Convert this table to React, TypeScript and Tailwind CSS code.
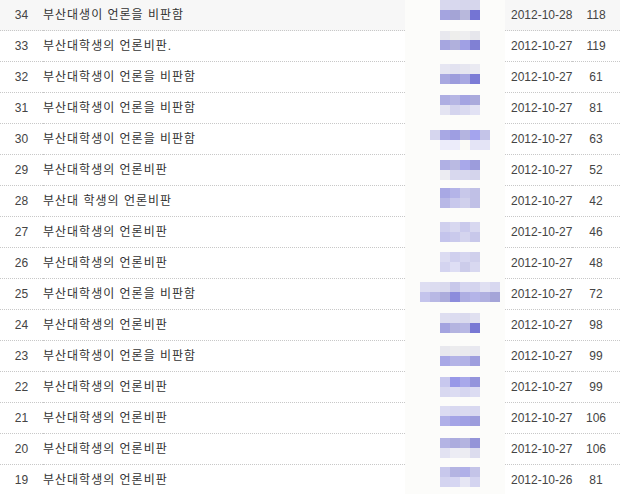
import React from "react";

type Row = {
  no: number;
  title: string;
  date: string;
  views: number;
  x: number;
  y: number;
  top: string[];
  bottom: string[];
};

const rows: Row[] = [
  { no: 34, title: "부산대생이 언론을 비판함", date: "2012-10-28", views: 118, x: 35, y: 0, top: ["#d8d8ee", "#d8d8ee", "#d6d6ec", "#d6d6ec"], bottom: ["#a4a4e0", "#a4a4d6", "#b8b8dc", "#7474d4"] },
  { no: 33, title: "부산대학생의 언론비판.", date: "2012-10-27", views: 119, x: 35, y: -1, top: ["#e8e8ee", "#eeeeec", "#eeeef0", "#e6e6ec"], bottom: ["#a6a6e0", "#b0b0dc", "#a0a0e4", "#8080d4"] },
  { no: 32, title: "부산대학생이 언론을 비판함", date: "2012-10-27", views: 61, x: 35, y: 2, top: ["#e6e6f2", "#e2e2f0", "#e6e6f0", "#eaeaf2"], bottom: ["#a8a8e0", "#9c9cdc", "#a8a8e2", "#7c7cd6"] },
  { no: 31, title: "부산대학생이 언론을 비판함", date: "2012-10-27", views: 81, x: 35, y: 2, top: ["#aeaee2", "#b6b6e4", "#a4a4e2", "#aaaadc"], bottom: ["#e4e4f2", "#d4d4ee", "#dadaf0", "#e2e2f4"] },
  { no: 30, title: "부산대학생이 언론을 비판함", date: "2012-10-27", views: 63, x: 25, y: 6, top: ["#d6d6ee", "#a8a8e4", "#9e9ee2", "#b4b4e0", "#a4a4ee", "#c4c4e8"], bottom: ["#fcfcfa", "#ececfa", "#ececfa", "#fafaf6", "#e4e4f6", "#e4e4f6"] },
  { no: 29, title: "부산대학생의 언론비판", date: "2012-10-27", views: 52, x: 35, y: 5, top: ["#b0b0e4", "#babae2", "#a8a8ea", "#9c9cdc"], bottom: ["#ececf2", "#d8d8ee", "#d8d8ee", "#d4d4ec"] },
  { no: 28, title: "부산대 학생의 언론비판", date: "2012-10-27", views: 42, x: 35, y: 2, top: ["#a8a8e4", "#b4b4e8", "#c8c8ea", "#c0c0e6"], bottom: ["#b8b8e6", "#c8c8ec", "#d0d0ec", "#c0c0e6"] },
  { no: 27, title: "부산대학생의 언론비판", date: "2012-10-27", views: 46, x: 35, y: 5, top: ["#d0d0ee", "#d8d8f0", "#cacaec", "#d8d8f0"], bottom: ["#c4c4ec", "#cacaec", "#d4d4ee", "#c8c8ea"] },
  { no: 26, title: "부산대학생의 언론비판", date: "2012-10-27", views: 48, x: 35, y: 4, top: ["#dcdcf2", "#d0d0ee", "#d6d6f0", "#d0d0ec"], bottom: ["#d4d4f0", "#dedef4", "#ccccea", "#d8d8f0"] },
  { no: 25, title: "부산대학생이 언론을 비판함", date: "2012-10-27", views: 72, x: 15, y: 3, top: ["#dedef2", "#dcdcf0", "#dadaee", "#c8c8ea", "#d6d6f0", "#d4d4ee", "#e0e0f2", "#d8d8f0"], bottom: ["#c4c4ec", "#b8b8e4", "#acacdc", "#8c8cdc", "#aeaee2", "#b4b4e8", "#b0b0e0", "#a4a4d8"] },
  { no: 24, title: "부산대학생의 언론비판", date: "2012-10-27", views: 98, x: 35, y: 3, top: ["#dedef0", "#dcdcf0", "#dadaee", "#e0e0f0"], bottom: ["#a4a4e0", "#b4b4e0", "#b8b8e4", "#7878d4"] },
  { no: 23, title: "부산대학생이 언론을 비판함", date: "2012-10-27", views: 99, x: 35, y: 5, top: ["#e8e8ee", "#ececee", "#eaeaee", "#e8e8f0"], bottom: ["#a8a8e6", "#b4b4e6", "#b2b2e6", "#9e9ede"] },
  { no: 22, title: "부산대학생의 언론비판", date: "2012-10-27", views: 99, x: 35, y: 5, top: ["#c8c8ee", "#9898e8", "#a8a8ea", "#9494dc"], bottom: ["#d8d8f0", "#dcdcf2", "#d6d6f0", "#dcdcf2"] },
  { no: 21, title: "부산대학생의 언론비판", date: "2012-10-27", views: 106, x: 35, y: 3, top: ["#dcdcf2", "#d8d8f0", "#dadaf0", "#d8d8f0"], bottom: ["#b0b0e8", "#a4a4e6", "#a0a0e4", "#9c9cdc"] },
  { no: 20, title: "부산대학생의 언론비판", date: "2012-10-27", views: 106, x: 35, y: 4, top: ["#b4b4e4", "#acacde", "#b4b4e0", "#9494d8"], bottom: ["#e2e2f2", "#ececf4", "#ececf2", "#dcdcee"] },
  { no: 19, title: "부산대학생의 언론비판", date: "2012-10-26", views: 81, x: 35, y: 2, top: ["#c8c8ec", "#b4b4e2", "#b0b0e8", "#c4c4e8"], bottom: ["#d4d4f0", "#d6d6f2", "#e6e6f4", "#d4d4f0"] },
];

function Mosaic({ r }: { r: Row }) {
  return (
    <svg width="100" height="31" viewBox="0 0 100 31" className="block">
      {r.top.map((c, i) => (
        <rect key={"t" + i} x={r.x + i * 10} y={r.y} width="10" height="10" fill={c} />
      ))}
      {r.bottom.map((c, i) => (
        <rect key={"b" + i} x={r.x + i * 10} y={r.y + 10} width="10" height="10" fill={c} />
      ))}
    </svg>
  );
}

export default function App() {
  return (
    <div
      className="w-[623px] h-[494px] overflow-hidden bg-white text-[12px] text-[#444] whitespace-nowrap"
      style={{ fontFamily: '"Liberation Sans", "Noto Sans CJK KR", sans-serif' }}
    >
      {rows.map((r, idx) => (
        <div
          key={r.no}
          className={`flex h-[31px] w-[620px] ${idx === 0 ? "bg-[#f7f7f7]" : "bg-white"}`}
        >
          <div className="w-[43px] shrink-0 flex items-center justify-center border-b border-dotted border-[#c8c8c8] pb-[1px]">
            {r.no}
          </div>
          <div className="w-[362px] shrink-0 flex items-center border-b border-dotted border-[#c8c8c8] text-[#333] tracking-[1px] pb-[1px]">
            {r.title}
          </div>
          <div className="w-[100px] shrink-0 bg-[#fcfcfa]">
            <Mosaic r={r} />
          </div>
          <div className="w-[67px] shrink-0 flex items-center pl-[6px] border-b border-dotted border-[#c8c8c8] pb-[1px]">
            {r.date}
          </div>
          <div className="w-[48px] shrink-0 flex items-center justify-center border-b border-dotted border-[#c8c8c8] pb-[1px]">
            {r.views}
          </div>
        </div>
      ))}
    </div>
  );
}
